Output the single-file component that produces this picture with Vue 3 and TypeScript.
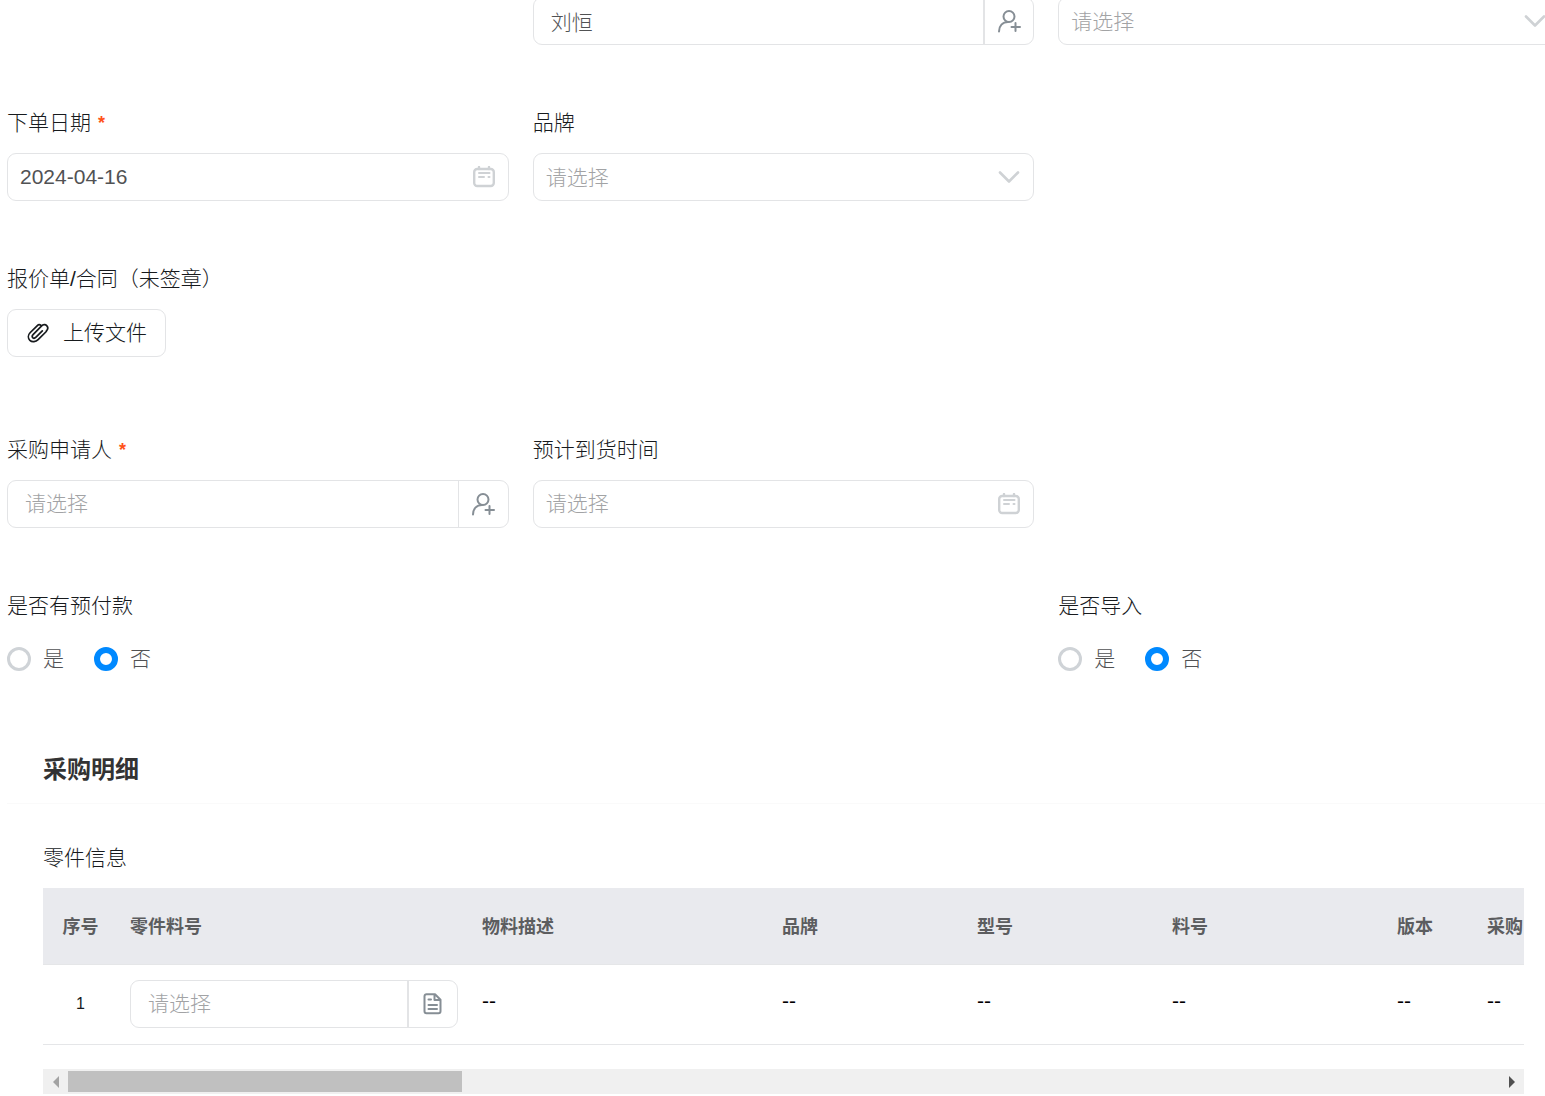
<script setup lang="ts">
import { ref } from 'vue'

interface Column {
  title: string
  width: number
}

const buyer = ref('刘恒')
const orderDate = ref('2024-04-16')
const applicant = ref('')
const arrival = ref('')
const part = ref('')
const prepaid = ref('否')
const imported = ref('否')
const options: string[] = ['是', '否']

const columns: Column[] = [
  { title: '序号', width: 75 },
  { title: '零件料号', width: 352 },
  { title: '物料描述', width: 300 },
  { title: '品牌', width: 195 },
  { title: '型号', width: 195 },
  { title: '料号', width: 225 },
  { title: '版本', width: 90 },
  { title: '采购', width: 195 },
]
</script>

<template>
  <main class="page">
    <form class="form" @submit.prevent>
      <div class="row first">
        <div class="cell second">
          <div class="control picker">
            <input v-model="buyer" type="text" aria-label="采购员" />
            <button type="button" class="addon wide-line" aria-label="选择人员">
              <svg class="person" viewBox="0 0 24 24"><circle cx="12" cy="7.5" r="5.5" /><path d="M2 22.500c0-5.500 3.500-9.500 9-9.500M18.500 14v8M14.500 18h8.500" /></svg>
            </button>
          </div>
        </div>
        <div class="cell">
          <div class="control">
            <select aria-label="选择"><option>请选择</option></select>
            <svg class="tail arrow" viewBox="0 0 22 22"><path d="M2 6.500l9 9 9-9" /></svg>
          </div>
        </div>
      </div>

      <div class="row">
        <div class="cell">
          <label class="label" for="order-date">下单日期<span class="star">*</span></label>
          <div class="control">
            <input id="order-date" v-model="orderDate" type="text" />
            <svg class="tail" viewBox="0 0 22 22"><rect x="1.200" y="3" width="19.600" height="17" rx="3" /><path d="M6 1v2M16 1v2" /><path class="thin" d="M6 7h10.500M6 11h5M15.500 11h1" /></svg>
          </div>
        </div>
        <div class="cell">
          <label class="label" for="brand">品牌</label>
          <div class="control">
            <select id="brand"><option>请选择</option></select>
            <svg class="tail arrow" viewBox="0 0 22 22"><path d="M2 6.500l9 9 9-9" /></svg>
          </div>
        </div>
      </div>

      <div class="row">
        <div class="cell">
          <span class="label">报价单/合同（未签章）</span>
          <button type="button" class="upload">
            <svg viewBox="0 0 22 22"><path d="M19.300 9.500l-8.200 8.100c-2.300 2.300-6 2.900-8.200.8-2.200-2.200-1.900-5.600.4-7.900l6.800-6.700c1.300-1.300 2.800-1.300 3.900-.3M6.300 12.300l8.100-8.200c1.700-1.700 3.900-2 5.300-.5 1.500 1.600 1.200 3.900-.4 5.600M6.300 12.300c-1.100 1.100-1.300 2.500-.6 3.300.8.8 2.300.6 3.300-.4l6.300-6.300" /></svg>
            <span>上传文件</span>
          </button>
        </div>
      </div>

      <div class="row after-upload">
        <div class="cell">
          <label class="label" for="applicant">采购申请人<span class="star">*</span></label>
          <div class="control picker">
            <input id="applicant" v-model="applicant" type="text" placeholder="请选择" />
            <button type="button" class="addon" aria-label="选择申请人">
              <svg class="person" viewBox="0 0 24 24"><circle cx="12" cy="7.500" r="5.500" /><path d="M2 22.500c0-5.500 3.500-9.500 9-9.500M18.500 14v8M14.500 18h8.500" /></svg>
            </button>
          </div>
        </div>
        <div class="cell">
          <label class="label" for="arrival">预计到货时间</label>
          <div class="control">
            <input id="arrival" v-model="arrival" type="text" placeholder="请选择" />
            <svg class="tail" viewBox="0 0 22 22"><rect x="1.200" y="3" width="19.600" height="17" rx="3" /><path d="M6 1v2M16 1v2" /><path class="thin" d="M6 7h10.500M6 11h5M15.500 11h1" /></svg>
          </div>
        </div>
      </div>

      <div class="row">
        <fieldset class="cell">
          <legend class="label">是否有预付款</legend>
          <div class="radios">
            <label v-for="o in options" :key="o"><input v-model="prepaid" type="radio" name="prepaid" :value="o" />{{ o }}</label>
          </div>
        </fieldset>
        <fieldset class="cell third">
          <legend class="label">是否导入</legend>
          <div class="radios">
            <label v-for="o in options" :key="o"><input v-model="imported" type="radio" name="imported" :value="o" />{{ o }}</label>
          </div>
        </fieldset>
      </div>

      <section class="section">
        <h2>采购明细</h2>
        <div class="detail">
          <span class="label">零件信息</span>
          <div class="table-wrap">
            <table>
              <colgroup>
                <col v-for="c in columns" :key="c.title" :style="{ width: c.width + 'px' }" />
              </colgroup>
              <thead>
                <tr><th v-for="c in columns" :key="c.title" scope="col">{{ c.title }}</th></tr>
              </thead>
              <tbody>
                <tr>
                  <td class="index">1</td>
                  <td>
                    <div class="control picker">
                      <input v-model="part" type="text" placeholder="请选择" aria-label="零件料号" />
                      <button type="button" class="addon wide-line" aria-label="选择零件">
                        <svg class="doc" viewBox="0 0 22 22"><path d="M4.500 1.200h8.500l5.500 5.500v11.600a2 2 0 0 1-2 2h-12a2 2 0 0 1-2-2V3.200a2 2 0 0 1 2-2zM12.500 1.500v5.500h5.500M6.500 6.500h2.500M6.500 12h8.500M6.500 16h8.500" /></svg>
                      </button>
                    </div>
                  </td>
                  <td v-for="c in columns.slice(2)" :key="c.title" class="empty">--</td>
                </tr>
              </tbody>
            </table>
          </div>
          <div class="scrollbar">
            <button type="button" aria-label="向左滚动"><svg viewBox="0 0 6 12"><path fill="#a3a3a3" d="M6 0v12L0 6z" /></svg></button>
            <div class="track"><div class="thumb"></div></div>
            <button type="button" aria-label="向右滚动"><svg viewBox="0 0 6 12"><path fill="#505050" d="M0 0v12l6-6z" /></svg></button>
          </div>
        </div>
      </section>
    </form>
  </main>
</template>

<style>
body {
  margin: 0;
  background: #fff;
}
</style>

<style scoped>
* {
  box-sizing: border-box;
}
.page {
  overflow: hidden;
  font-family: "Liberation Sans", "Noto Sans CJK SC", sans-serif;
  font-size: 21px;
  font-weight: 300;
  color: #171a1d;
}
.form {
  margin: -3px -15px 0 7px;
}
.row {
  display: grid;
  grid-template-columns: repeat(3, minmax(0, 1fr));
  column-gap: 24px;
  margin-top: 63px;
}
.row.first {
  margin-top: 0;
}
.row.after-upload {
  margin-top: 78px;
}
.second {
  grid-column: 2;
}
.third {
  grid-column: 3;
}
fieldset {
  margin: 0;
  padding: 0;
  border: 0;
  min-width: 0;
}
.label {
  display: block;
  height: 30px;
  padding: 0;
  margin-bottom: 15px;
  line-height: 30px;
  white-space: nowrap;
}
.star {
  margin-left: 7px;
  font-size: 18px;
  font-weight: 700;
  line-height: 1;
  vertical-align: 1px;
  color: #ff5219;
}
input,
select,
button {
  font: inherit;
  color: inherit;
}
button {
  padding: 0;
  border: 0;
  background: none;
}
.control {
  display: flex;
  align-items: center;
  height: 48px;
  border: 1px solid #e3e4e6;
  border-radius: 9px;
  background: #fff;
}
.control input,
.control select {
  flex: 1;
  min-width: 0;
  height: 46px;
  padding: 0 12px;
  border: 0;
  outline: 0;
  background: transparent;
  color: #515254;
  appearance: none;
}
.control select,
.control input::placeholder {
  color: #a2a3a5;
  opacity: 1;
}
.control.picker input {
  padding-left: 17px;
}
svg {
  display: block;
  fill: none;
  stroke-linecap: round;
  stroke-linejoin: round;
}
.tail {
  width: 22px;
  height: 22px;
  margin-right: 13px;
  stroke: #cfd2d5;
  stroke-width: 2.4;
}
.tail .thin {
  stroke-width: 2;
}
.arrow {
  stroke-width: 2.6;
}
.addon {
  display: flex;
  align-items: center;
  justify-content: center;
  width: 50px;
  height: 46px;
  border-left: 1px solid #e3e4e6;
}
.addon.wide-line {
  border-left-width: 2px;
}
.person {
  width: 24px;
  height: 24px;
  stroke: #868e95;
  stroke-width: 2;
}
.doc {
  width: 22px;
  height: 22px;
  stroke: #868e95;
  stroke-width: 2;
}
.upload {
  display: flex;
  align-items: center;
  gap: 14px;
  height: 48px;
  padding: 0 18px 0 19px;
  border: 1px solid #e3e4e6;
  border-radius: 9px;
  line-height: 30px;
}
.upload svg {
  width: 22px;
  height: 22px;
  stroke: #171a1d;
  stroke-width: 1.7;
}
.radios {
  display: flex;
  align-items: center;
  gap: 30px;
  height: 46px;
  line-height: 30px;
  color: #515254;
}
.radios label {
  display: flex;
  align-items: center;
  gap: 12px;
}
.radios input {
  width: 24px;
  height: 24px;
  margin: 0;
  border: 3px solid #cfd3d7;
  border-radius: 50%;
  background: #fff;
  appearance: none;
}
.radios input:checked {
  border: 6px solid #0089ff;
}
.section {
  margin-top: 70px;
}
.section h2 {
  margin: 0;
  padding: 0 36px 15px;
  border-bottom: 1px solid #fafafa;
  font-size: 24px;
  font-weight: 700;
  line-height: 36px;
  color: #333;
}
.detail {
  padding: 39px 36px 2px;
}
.table-wrap {
  overflow: hidden;
}
table {
  width: 1627px;
  table-layout: fixed;
  border-collapse: separate;
  border-spacing: 0;
}
th,
td {
  padding: 0 12px;
  text-align: left;
  white-space: nowrap;
}
th {
  height: 77px;
  padding-bottom: 2px;
  border-bottom: 1px solid #e5e6e8;
  background: #e9eaee;
  font-size: 18px;
  font-weight: 700;
  color: #5c5d5f;
}
th:first-child,
.index {
  text-align: center;
}
td {
  height: 80px;
  padding-bottom: 1px;
  border-bottom: 1px solid #e5e6e8;
}
.index {
  font-size: 16px;
}
.empty {
  padding-bottom: 8px;
  color: #000;
}
.scrollbar {
  display: flex;
  align-items: center;
  height: 25px;
  margin-top: 24px;
  background: #f0f0f0;
}
.scrollbar button {
  display: flex;
  align-items: center;
  justify-content: center;
  width: 25px;
  height: 25px;
}
.scrollbar svg {
  width: 6px;
  height: 12px;
}
.track {
  flex: 1;
}
.thumb {
  width: 27.5%;
  height: 21px;
  background: #c0c0c0;
}
</style>
